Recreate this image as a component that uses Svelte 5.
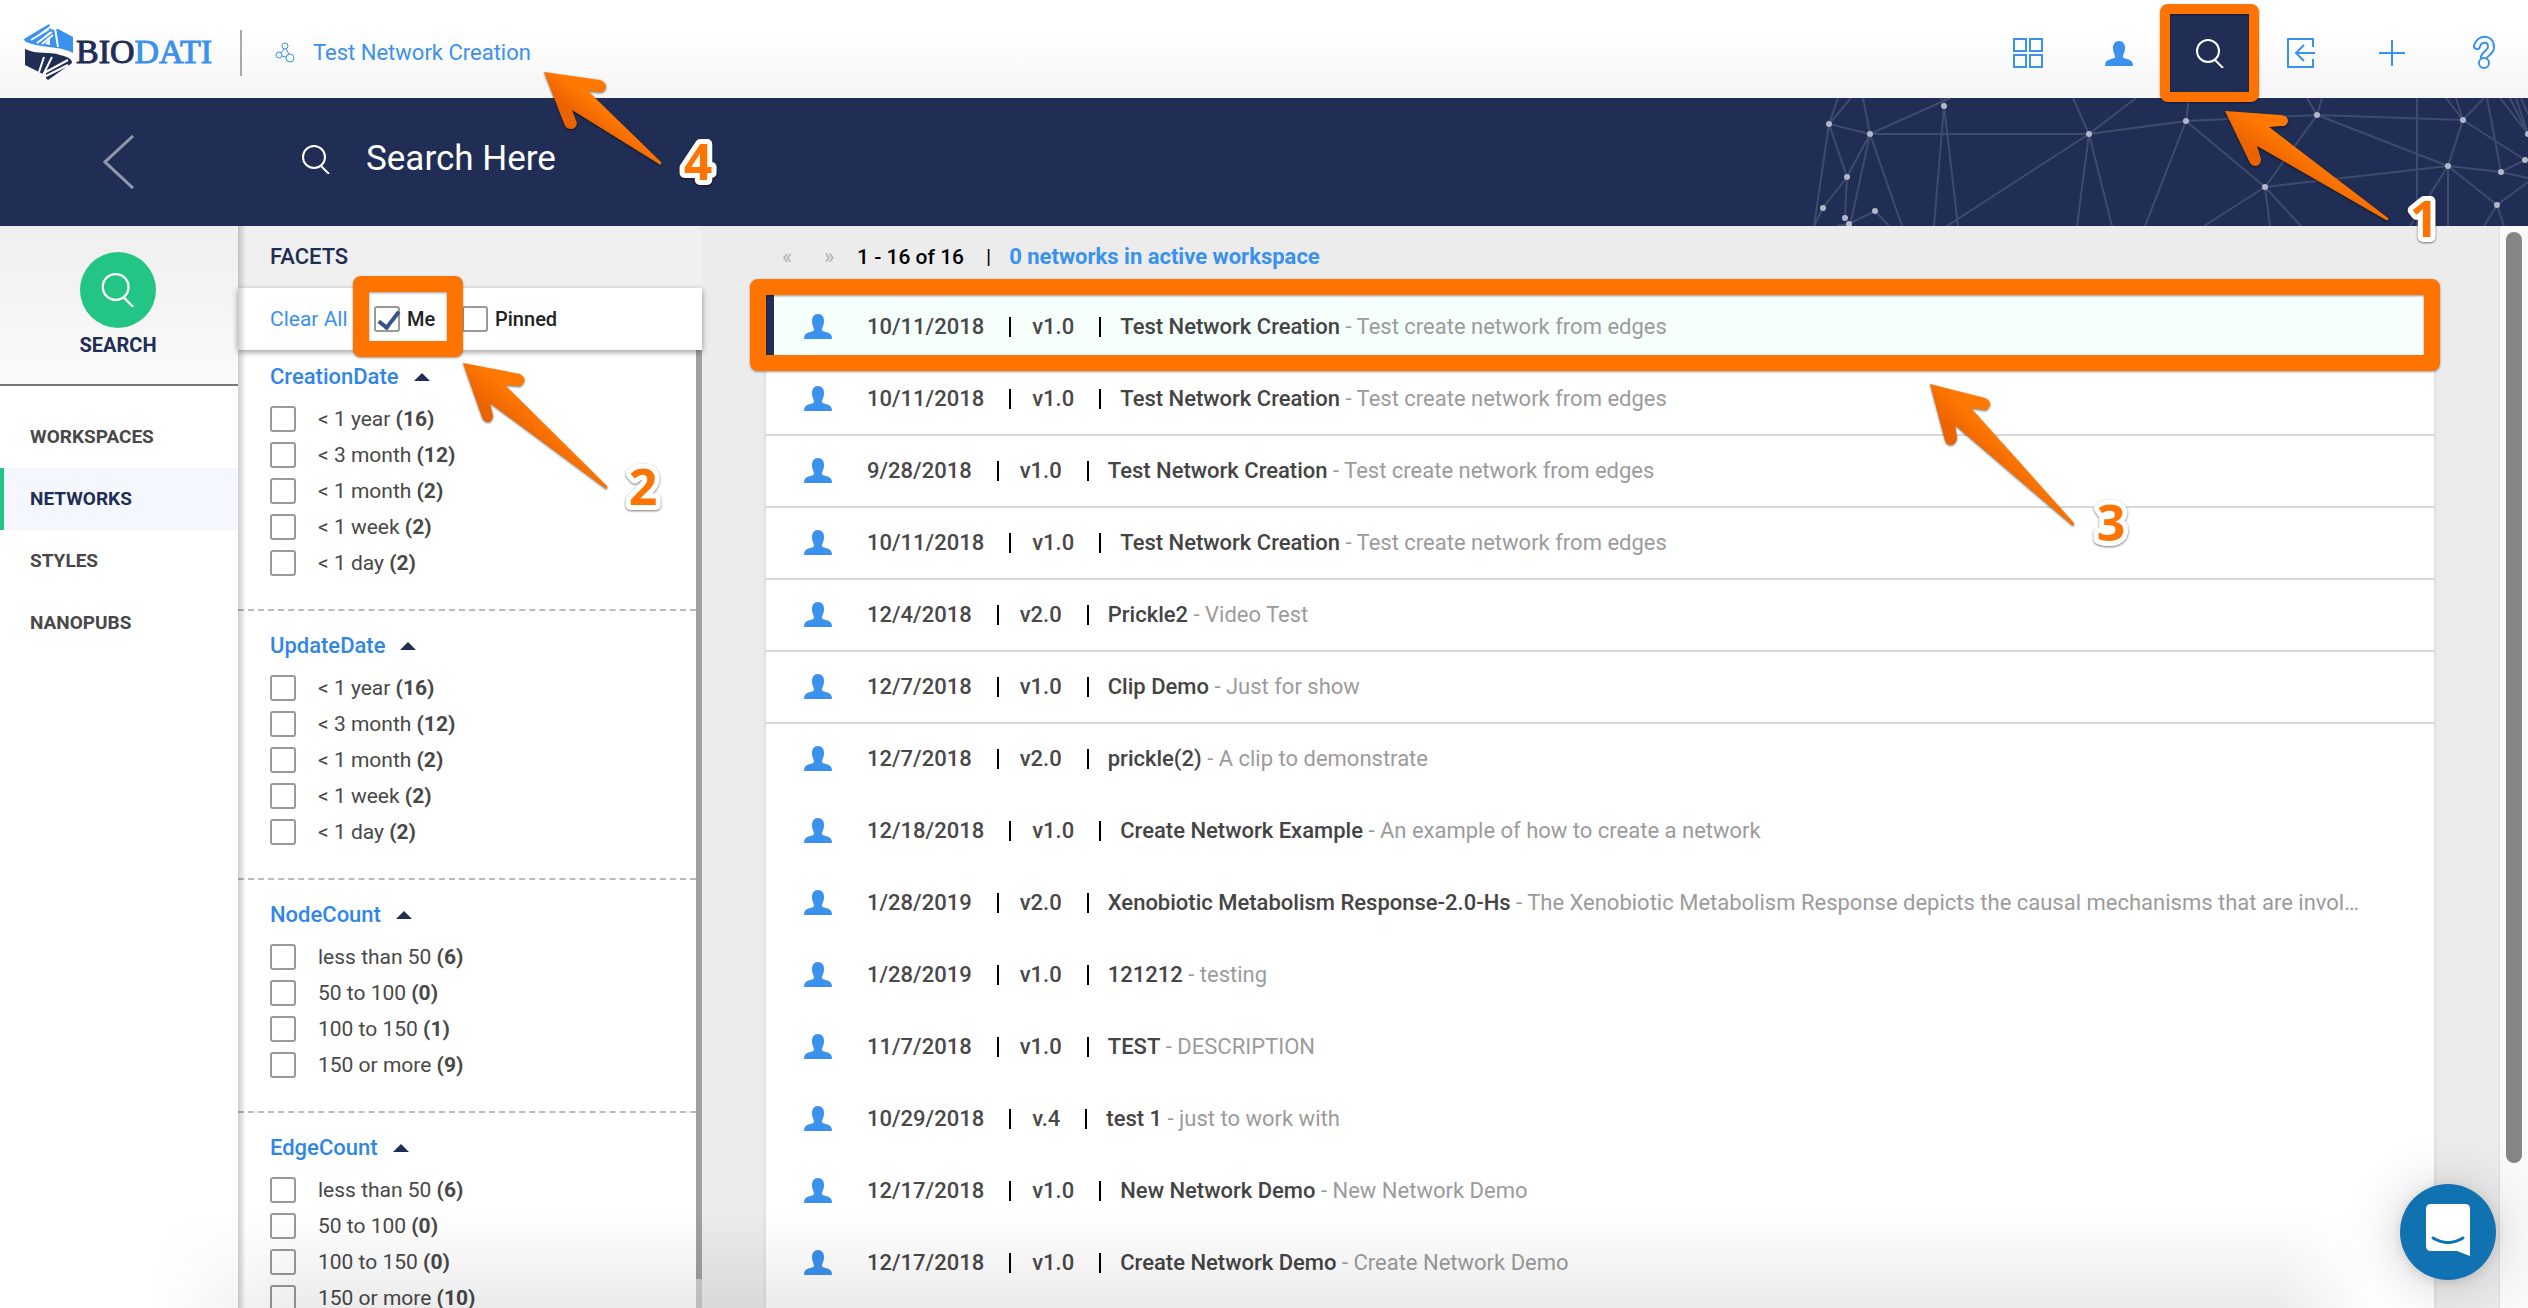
<script>
  const nav = ['WORKSPACES', 'NETWORKS', 'STYLES', 'NANOPUBS'];
  const ages = [['< 1 year', 16], ['< 3 month', 12], ['< 1 month', 2], ['< 1 week', 2], ['< 1 day', 2]];
  const facets = [
    { name: 'CreationDate', options: ages },
    { name: 'UpdateDate', options: ages },
    { name: 'NodeCount', options: [['less than 50', 6], ['50 to 100', 0], ['100 to 150', 1], ['150 or more', 9]] },
    { name: 'EdgeCount', options: [['less than 50', 6], ['50 to 100', 0], ['100 to 150', 0], ['150 or more', 10]] }
  ];
  const rows = [
    ['10/11/2018', 'v1.0', 'Test Network Creation', 'Test create network from edges'],
    ['10/11/2018', 'v1.0', 'Test Network Creation', 'Test create network from edges'],
    ['9/28/2018', 'v1.0', 'Test Network Creation', 'Test create network from edges'],
    ['10/11/2018', 'v1.0', 'Test Network Creation', 'Test create network from edges'],
    ['12/4/2018', 'v2.0', 'Prickle2', 'Video Test'],
    ['12/7/2018', 'v1.0', 'Clip Demo', 'Just for show'],
    ['12/7/2018', 'v2.0', 'prickle(2)', 'A clip to demonstrate'],
    ['12/18/2018', 'v1.0', 'Create Network Example', 'An example of how to create a network'],
    ['1/28/2019', 'v2.0', 'Xenobiotic Metabolism Response-2.0-Hs', 'The Xenobiotic Metabolism Response depicts the causal mechanisms that are invol…'],
    ['1/28/2019', 'v1.0', '121212', 'testing'],
    ['11/7/2018', 'v1.0', 'TEST', 'DESCRIPTION'],
    ['10/29/2018', 'v.4', 'test 1', 'just to work with'],
    ['12/17/2018', 'v1.0', 'New Network Demo', 'New Network Demo'],
    ['12/17/2018', 'v1.0', 'Create Network Demo', 'Create Network Demo']
  ];
  const nodes = [[29, 26], [70, 36], [144, 8], [289, 36], [386, 23], [47, 79], [23, 110], [45, 120], [49, 126], [75, 113], [465, 89], [517, 17], [663, 22], [648, 68], [701, 74], [697, 107], [725, 62], [728, 36]];
  const mesh = 'M29 26L38 0M29 26L51 0M29 26L70 36M29 26L47 79M29 26L14 128M70 36L63 0M70 36L47 79M70 36L50 128M70 36L102 128M70 36L150 0M70 36H289M47 79L23 110L14 128M47 79L45 120M37 128L49 126L75 113L89 128M144 8L141 0M144 8L145 0M144 8L134 128M144 8L158 128M289 36L273 0M289 36L336 0M289 36L147 128M289 36L277 128M289 36L312 128M289 36L386 23L389 0M386 23L517 17M386 23L345 128M386 23L465 89L517 17M465 89L648 68M465 89L404 128M465 89L470 128M465 89L501 128M517 17L507 0M517 17L522 0M517 17L663 22M517 17L648 68M663 22L646 0M663 22L656 0M663 22L684 0M663 22L648 68M663 22L725 62M648 68L701 74L725 62M648 68L697 107M648 68V128M648 68L610 128M617 0V128M701 74L728 80M701 74L687 0M697 107L728 84M697 107L684 128M697 107L704 128M728 36L700 0M728 36L710 0M728 36L716 0M728 16L721 0';
</script>

{#snippet user(cls)}
  <svg class={cls} viewBox="0 0 28 25" aria-hidden="true"><path d="M14 0c4 0 6 3 6 7 0 5-2 6-2 9 0 2 9 2 9.600 6L28 25H0L.4 22C1 18 10 18 10 16c0-3-2-4-2-9 0-4 2-7 6-7z" /></svg>
{/snippet}
{#snippet glass(cls)}
  <svg class={cls} viewBox="0 0 28 29" aria-hidden="true"><circle cx="12" cy="12" r="11" /><path d="M19 21l8 8" /></svg>
{/snippet}

<div class="app">
  <header class="top">
    <a class="logo" href="#home" aria-label="Biodati home">
      <svg class="mark" viewBox="0 0 50 56" aria-hidden="true">
        <path class="light" d="M0 15L25 0l1 2L12 12l14-8 2 2-13 11 12-8 2 2-8 9 5 1V6l8-1 15 8v16C38 23 27 24 12 21 5 19 0 18 0 15z" />
        <path class="gap" d="M7 16L25 5M13 19L28 8M18 20l11-9M31 4l3 19" />
        <path class="navy" d="M1 25c12 6 24 2 35 6 8 2 12 4 12 8L24 56l-2-2V44l-3 6L1 41z" />
        <path class="gap" d="M20 33L15 48M28 33l-8 16 24-13M22 52l22-11" />
      </svg>
      <span class="word">BIO<span>DATI</span></span>
    </a>
    <a class="current" href="#network">
      <svg viewBox="0 0 20 22" aria-hidden="true"><circle cx="10" cy="4" r="3" /><circle cx="4" cy="13" r="3" /><circle cx="15" cy="16" r="4" /><path d="M9 7l-3 4M11 7l3 5M7 14l4 1" /></svg>
      Test Network Creation
    </a>
    <nav class="tools" aria-label="Tools">
      <button aria-label="Dashboard"><svg class="line" width="30" height="30" viewBox="0 0 30 30"><path d="M1 1h12v12H1zM17 1h12v12H17zM1 17h12v12H1zM17 17h12v12H17z" /></svg></button>
      <button aria-label="Account">{@render user('person')}</button>
      <button class="active" aria-label="Search">{@render glass('glass')}<span class="frame tool-frame"></span></button>
      <button aria-label="Import"><svg class="line" width="28" height="30" viewBox="0 0 28 30"><path d="M26 9V1H1v28h25v-8M28 15H9M17 7l-8 8 8 8" /></svg></button>
      <button aria-label="Add"><svg class="line" width="26" height="26" viewBox="0 0 26 26"><path d="M13 0v26M0 13h26" /></svg></button>
      <button aria-label="Help"><svg class="help" width="26" height="36" viewBox="0 0 26 36"><path class="outer" d="M7 11C9 3 21 2 21 12c0 6-6 6-7 10" /><path class="inner" d="M7 11C9 3 21 2 21 12c0 6-6 6-7 10" /><circle cx="14" cy="28" r="5" /></svg></button>
    </nav>
  </header>

  <div class="banner">
    <button class="back" aria-label="Back"><svg viewBox="0 0 32 54" aria-hidden="true"><path d="M30 1L2 27l28 26" /></svg></button>
    <label class="search">{@render glass('glass')}<input type="text" aria-label="Search" placeholder="Search Here" /></label>
    <svg class="mesh" viewBox="0 0 728 128" aria-hidden="true">
      <path d={mesh} />
      {#each nodes as [x, y]}<circle cx={x} cy={y} r="3" />{/each}
    </svg>
  </div>

  <div class="body">
    <aside class="side">
      <button class="find"><span class="disc">{@render glass('glass')}</span>SEARCH</button>
      <nav aria-label="Collections">
        {#each nav as item}
          <a href="#{item.toLowerCase()}" class:on={item === 'NETWORKS'}>{item}</a>
        {/each}
      </nav>
    </aside>

    <section class="facets">
      <h2>FACETS</h2>
      <div class="filters">
        <button>Clear All</button>
        <label class="me"><input type="checkbox" checked />Me<span class="frame me-frame"></span></label>
        <label class="pinned"><input type="checkbox" />Pinned</label>
      </div>
      <div class="groups">
        {#each facets as f}
          <fieldset>
            <legend><button>{f.name}<i></i></button></legend>
            {#each f.options as [name, count]}
              <label><input type="checkbox" /><span>{name} <b>({count})</b></span></label>
            {/each}
          </fieldset>
        {/each}
        <span class="bar"></span>
      </div>
    </section>

    <main>
      <div class="pager">
        <button aria-label="Previous page">«</button><button aria-label="Next page">»</button>
        <span class="range">1 - 16 of 16</span><span class="sep">|</span>
        <a href="#workspace">0 networks in active workspace</a>
      </div>
      <ul>
        {#each rows as [date, version, title, text], i}
          <li class:selected={i === 0} class:ruled={i < 6}>
            {@render user('person')}
            <span class="cell">{date}</span>
            <span class="cell">{version}</span>
            <a href="#item-{i}"><b>{title}</b> - {text}</a>
            {#if i === 0}<span class="frame row-frame"></span>{/if}
          </li>
        {/each}
      </ul>
    </main>
    <div class="track"><span></span></div>
  </div>

  <div class="haze"></div>
  <button class="chat" aria-label="Open chat">
    <svg viewBox="0 0 44 52" aria-hidden="true"><path class="bubble" d="M5 0h34q5 0 5 5v47L31 47H5q-5 0-5-5V5q0-5 5-5z" /><path class="smile" d="M7 34q15 9 30 0" /></svg>
  </button>

  <svg class="notes west" width="740" height="560" viewBox="0 0 740 560" aria-hidden="true">
    <defs>
      <linearGradient id="flame" x1="0" y1="1" x2="1" y2="0"><stop offset="0.400" stop-color="#eb6200" /><stop offset="0.550" stop-color="#ff7800" /></linearGradient>
    </defs>
    <path d="M544 72L600 80Q606 82 606 87Q605 93 599 92L588 91L661 162Q662 166 659 164L572 110L577 123Q576 129 571 129Q567 129 565 126Z" />
    <path d="M463 363L520 374Q526 378 524 382Q522 387 517 386L505 385L607 486Q608 490 605 488L490 403L493 416Q492 422 488 422Q484 422 482 417Z" />
    <text x="698" y="180">4</text>
    <text x="643" y="505">2</text>
  </svg>
  <svg class="notes east" width="640" height="600" viewBox="1888 0 640 600" aria-hidden="true">
    <path d="M2225 111L2281 115Q2288 116 2288 121Q2287 127 2281 126L2269 127L2388 218Q2389 221 2386 220L2257 146L2261 159Q2261 165 2256 166Q2252 166 2250 163Z" />
    <path d="M1930 384L1985 398Q1991 401 1990 405Q1988 411 1984 410L1971 408L2074 523Q2074 527 2072 525L1955 425L1957 438Q1956 444 1951 445Q1946 445 1945 440Z" />
    <text x="2424" y="237">1</text>
    <text x="2111" y="541">3</text>
  </svg>
</div>

<style>
  :global(body) { margin: 0; }
  .app { position: relative; display: flex; flex-direction: column; height: 100vh; overflow: hidden; font: 20px/24px Roboto, sans-serif; color: #484848; }
  .app :global(*) { box-sizing: border-box; }
  button { border: 0; padding: 0; background: none; font: inherit; color: inherit; cursor: pointer; }
  a { color: inherit; text-decoration: none; }
  .line, .glass { fill: none; stroke: currentColor; stroke-width: 2; }
  .glass { width: 28px; height: 29px; }
  .person { width: 28px; height: 25px; fill: #3a91ee; flex: none; }

  .top { display: flex; align-items: center; height: 98px; flex: none; background: linear-gradient(#fff 30%, #f5f5f5); color: #3a91ee; }
  .logo { display: flex; align-items: center; gap: 2px; padding: 5px 0 0 24px; width: 240px; }
  .mark { width: 50px; height: 56px; flex: none; }
  .light { fill: #3a91ee; }
  .navy { fill: #202e56; }
  .gap { fill: none; stroke: #fff; stroke-width: 2; }
  .word { font: 34px/40px "Liberation Serif", serif; color: #202e56; -webkit-text-stroke: 1px currentColor; }
  .word span { color: #3a91ee; }
  .current { display: flex; align-items: center; gap: 18px; margin-top: 8px; padding-left: 33px; height: 46px; border-left: 2px solid #aaa; font-size: 22px; white-space: nowrap; }
  .current svg { width: 20px; height: 22px; fill: none; stroke: currentColor; }
  .tools { display: flex; margin-left: auto; align-self: stretch; }
  .tools button { position: relative; width: 91px; display: flex; align-items: center; justify-content: center; padding-top: 8px; }
  .tools .active { margin-top: 8px; padding-top: 0; background: #202e56; color: #fff; }
  .help { fill: none; }
  .help .outer { stroke: #3a91ee; stroke-width: 8; stroke-linecap: round; }
  .help .inner { stroke: #fdfdfd; stroke-width: 4; stroke-linecap: round; }
  .help circle { stroke: #3a91ee; stroke-width: 2; fill: #fdfdfd; }

  .banner { position: relative; display: flex; align-items: center; height: 128px; flex: none; background: #202e56; color: #fff; }
  .back { width: 238px; height: 54px; }
  .back svg { width: 32px; height: 54px; fill: none; stroke: #9298ac; stroke-width: 3; }
  .search { display: flex; align-items: center; gap: 36px; padding: 0 0 6px 64px; position: relative; z-index: 1; }
  .search input { width: 900px; border: 0; outline: 0; padding: 0; background: none; font: 35px/44px Roboto, sans-serif; color: #fff; }
  .search input::placeholder { color: #fff; opacity: 1; }
  .mesh { position: absolute; right: 0; top: 0; width: 728px; height: 128px; fill: #b3b8c8; }
  .mesh path { fill: none; stroke: #fff; stroke-opacity: 0.140; stroke-width: 2; }

  .body { display: flex; flex: 1; min-height: 0; background: #ececec; }
  .side { width: 238px; flex: none; background: #fff; }
  .find { display: flex; flex-direction: column; align-items: center; gap: 5px; width: 100%; height: 160px; padding: 26px 2px 0 0; border-bottom: 2px solid #777; background: linear-gradient(#efefef, #fafafa); color: #202e56; font-weight: 700; }
  .disc { display: flex; align-items: center; justify-content: center; width: 76px; height: 76px; border-radius: 50%; background: #22c584; color: #fff; }
  .disc :global(.glass) { width: 34px; height: 34px; }
  .side nav { padding-top: 20px; font-size: 19px; font-weight: 700; }
  .side nav a { display: flex; align-items: center; height: 62px; padding-left: 26px; border-left: 4px solid transparent; }
  .side nav .on { background: #f4f8fe; border-color: #22c584; color: #202e56; }

  .facets { position: relative; display: flex; flex-direction: column; width: 464px; flex: none; background: #fff; }
  .facets::before { content: ""; position: absolute; inset: 0 auto 0 0; width: 8px; background: linear-gradient(90deg, #0003, #0000); z-index: 3; }
  h2 { margin: 0; padding: 19px 32px; background: #f0f0f0; font-size: 22px; line-height: 24px; font-weight: 500; color: #202e56; }
  .filters { position: relative; z-index: 2; display: flex; align-items: center; height: 62px; flex: none; padding-left: 32px; background: #fff; box-shadow: 0 2px 6px #0006; font-weight: 500; color: #222; }
  .filters button { color: #3a91ee; font-size: 21px; font-weight: 400; width: 104px; text-align: left; }
  .filters label { position: relative; display: flex; align-items: center; gap: 7px; }
  .me { width: 88px; }
  input[type='checkbox'] { appearance: none; position: relative; flex: none; width: 26px; height: 26px; margin: 0; border: 2px solid #999; border-radius: 3px; background: #fff; }
  input[type='checkbox']:checked::after { content: ""; position: absolute; left: 7px; top: -1px; width: 8px; height: 18px; border: solid #365486; border-width: 0 4px 4px 0; transform: rotate(38deg); }
  .groups { position: relative; flex: 1; min-height: 0; overflow: hidden; }
  fieldset { margin: 0 6px 0 0; border: 0; border-bottom: 2px dashed #bbb; padding: 22px 32px 28px; min-width: 0; }
  fieldset:first-child { padding-top: 14px; }
  legend { float: left; width: 100%; padding: 0; margin-bottom: 11px; font-size: 22px; line-height: 26px; font-weight: 500; color: #2f86e8; }
  legend button { display: flex; align-items: center; gap: 15px; }
  legend i { border: 8px solid transparent; border-top: 0; border-bottom: 8px solid #202e56; }
  fieldset label { display: flex; align-items: center; gap: 22px; height: 36px; width: 100%; clear: both; font-size: 21px; }
  .bar { position: absolute; right: 0; top: 0; bottom: 0; width: 6px; background: linear-gradient(#a0a0a0 97%, #ccc 97%); }

  main { display: flex; flex-direction: column; flex: 1; min-width: 0; padding: 19px 64px 0; border-right: 2px solid #e4e4e4; }
  .pager { display: flex; align-items: center; height: 24px; padding-left: 16px; font-size: 21px; font-weight: 500; color: #000; }
  .pager button { width: 42px; height: 24px; text-align: left; color: #b0b0b0; font-size: 22px; font-weight: 400; }
  .range { margin-left: -9px; }
  .pager .sep { padding: 0 18px 0 22px; font-weight: 400; }
  .pager a { color: #3a91ee; font-size: 22px; font-weight: 700; }
  ul { flex: 1 0 auto; margin: 23px 0 0; padding: 0; list-style: none; background: #fff; box-shadow: 0 0 4px #0002; }
  li { position: relative; display: flex; align-items: center; height: 72px; padding: 0 50px 1px 38px; border-bottom: 2px solid transparent; font-size: 22px; }
  li.ruled { border-bottom-color: #d8d8d8; }
  li.selected { background: #f5fffc; box-shadow: inset 8px 0 #202e56; }
  .cell { display: flex; align-items: center; font-weight: 500; margin-left: 35px; }
  .cell + .cell { margin-left: 21px; }
  .cell::after { content: ""; width: 2px; height: 20px; margin-left: 25px; background: #000; }
  li a { margin-left: 19px; min-width: 0; overflow: hidden; text-overflow: ellipsis; white-space: nowrap; color: #9b9b9b; }
  li b { font-weight: 500; color: #444; }
  .track { width: 28px; flex: none; background: #fafafa; padding: 6px; }
  .track span { display: block; width: 16px; height: 87%; border-radius: 8px; background: #858585; }

  .frame { position: absolute; border: 16px solid #ff7300; border-radius: 8px; filter: drop-shadow(0 1px 1px #0006); z-index: 3; pointer-events: none; }
  .tool-frame { inset: -4px; border-width: 10px; }
  .me-frame { inset: -30px auto auto -21px; width: 110px; height: 81px; }
  .row-frame { inset: -13px -6px -9px -16px; }
  .haze { position: absolute; left: 0; right: 0; bottom: 0; height: 96px; background: linear-gradient(#0000, #00000014); mask-image: linear-gradient(90deg, #0000 6%, #000 12%, #000 90%, #0000 94%); pointer-events: none; }
  .chat { position: absolute; right: 32px; bottom: 28px; width: 96px; height: 96px; border-radius: 50%; background: #1172b2; box-shadow: 0 2px 12px #0002, 0 4px 60px #0003; }
  .chat svg { width: 44px; height: 52px; }
  .bubble { fill: #fff; }
  .smile { fill: none; stroke: #1172b2; stroke-width: 3; stroke-linecap: round; }
  .notes { position: absolute; top: 0; pointer-events: none; fill: url(#flame); filter: drop-shadow(0 1px 1px #0008); z-index: 4; }
  .west { left: 0; }
  .east { right: 0; }
  .notes text { font: 700 50px "Open Sans", sans-serif; text-anchor: middle; fill: #ff7300; stroke: #fff; stroke-width: 10px; stroke-linejoin: round; paint-order: stroke; }
</style>
